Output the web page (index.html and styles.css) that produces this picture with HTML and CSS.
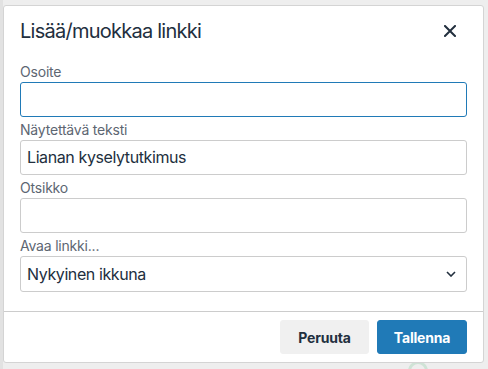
FILE: index.html
```html
<!DOCTYPE html>
<html lang="fi">
<head>
<meta charset="utf-8">
<link rel="stylesheet" href="styles.css">
</head>
<body>
<div class="backdrop">
  <div class="page-hint hint-left"></div>
  <div class="page-hint hint-circle"></div>
  <div class="dialog">
    <div class="dialog-header">
      <div class="dialog-title">Lisää/muokkaa linkki</div>
      <button class="close-btn" aria-label="Sulje">
        <svg width="12" height="12" viewBox="0 0 12 12"><path d="M1 1 L11 11 M11 1 L1 11" stroke="#222f3e" stroke-width="2" fill="none" stroke-linecap="square"/></svg>
      </button>
    </div>
    <div class="dialog-body">
      <div class="field">
        <label class="label">Osoite</label>
        <div class="input focused"></div>
      </div>
      <div class="field">
        <label class="label">Näytettävä teksti</label>
        <div class="input">Lianan kyselytutkimus</div>
      </div>
      <div class="field">
        <label class="label">Otsikko</label>
        <div class="input"></div>
      </div>
      <div class="field">
        <label class="label">Avaa linkki...</label>
        <div class="input select">
          <span>Nykyinen ikkuna</span>
          <svg width="10" height="6" viewBox="0 0 10 6"><path d="M1 1 L5 5 L9 1" stroke="#222f3e" stroke-width="1.6" fill="none"/></svg>
        </div>
      </div>
    </div>
    <div class="dialog-footer">
      <button class="btn btn-secondary">Peruuta</button>
      <button class="btn btn-primary">Tallenna</button>
    </div>
  </div>
</div>
</body>
</html>
```
FILE: styles.css
```css
* { box-sizing: border-box; }
html, body { margin: 0; padding: 0; }
body {
  width: 488px;
  height: 369px;
  overflow: hidden;
  background: #efefef;
  font-family: Inter, "Noto Sans", "Liberation Sans", sans-serif;
  color: #222f3e;
}
.backdrop {
  position: relative;
  width: 488px;
  height: 369px;
  padding: 5px 4px 0 3px;
  background: #eeeeee;
}
.page-hint { position: absolute; }
.hint-left {
  left: 0; top: 0; width: 3px; height: 369px;
  background: #e2e2e2;
}
.hint-circle {
  left: 408px; top: 361px; width: 20px; height: 20px;
  border-radius: 50%;
  border: 3px solid #cfe3d6;
}
.dialog {
  position: relative;
  width: 481px;
  height: 358px;
  background: #fff;
  border: 1px solid #d4d4d4;
  border-radius: 3px;
  display: flex;
  flex-direction: column;
}
.dialog-header {
  display: flex;
  justify-content: space-between;
  align-items: center;
  padding: 12px 16px 0 16px;
  height: 38px;
}
.dialog-title {
  font-size: 20px;
  line-height: 26px;
  font-weight: 400;
  letter-spacing: -0.75px;
}
.close-btn {
  border: none;
  background: none;
  padding: 0;
  width: 24px;
  height: 24px;
  display: flex;
  align-items: center;
  justify-content: center;
  margin-right: 5px;
}
.dialog-body {
  flex: 1;
  padding: 19px 16px 0 16px;
  display: flex;
  flex-direction: column;
  gap: 4px;
}
.field { display: flex; flex-direction: column; }
.label {
  font-size: 14px;
  line-height: 18px;
  margin-bottom: 1px;
  color: #5d6672;
  letter-spacing: -0.2px;
}
.input {
  height: 35px;
  border: 1px solid #cccccc;
  border-radius: 3px;
  padding: 0 6px;
  font-size: 16px;
  line-height: 33px;
  color: #222f3e;
  letter-spacing: -0.4px;
}
.input.focused { border-color: #207ab7; }
.select {
  display: flex;
  justify-content: space-between;
  align-items: center;
  height: 36px;
  padding-right: 10px;
}
.dialog-footer {
  border-top: 1px solid #cccccc;
  padding: 8px 16px;
  display: flex;
  justify-content: flex-end;
  gap: 8px;
}
.btn {
  height: 34px;
  border-radius: 3px;
  border: 1px solid transparent;
  font-family: Inter, "Noto Sans", "Liberation Sans", sans-serif;
  font-size: 14px;
  font-weight: 700;
  padding: 0 12px;
  letter-spacing: -0.2px;
}
.btn-secondary { background: #f0f0f0; color: #222f3e; border-color: #f0f0f0; width: 89px; }
.btn-primary { background: #207ab7; color: #fff; border-color: #207ab7; width: 90px; }
```
